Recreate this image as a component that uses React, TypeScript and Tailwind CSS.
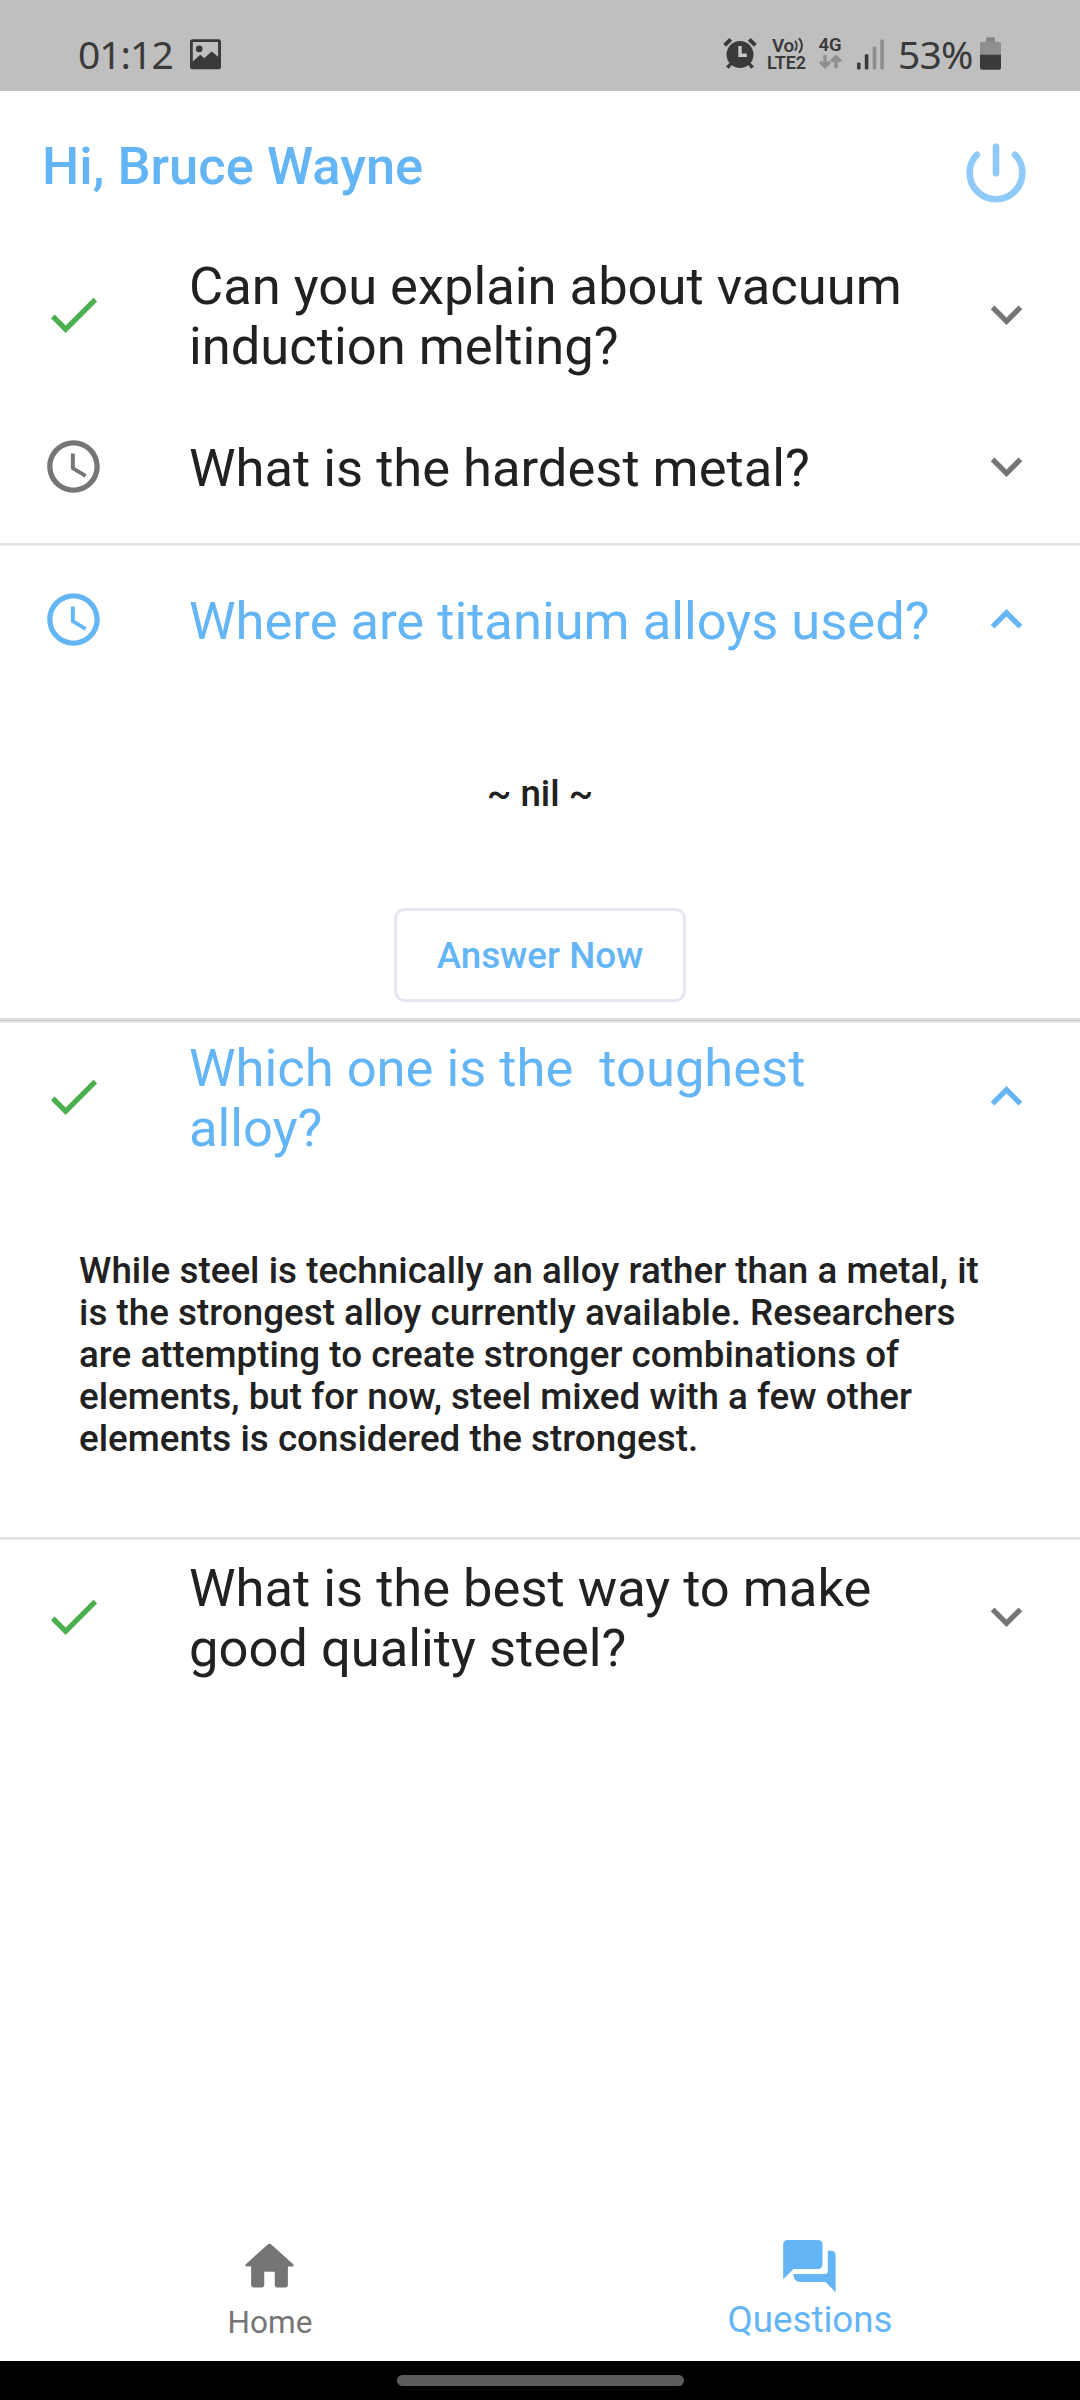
import type { ReactNode } from "react";

function AlarmIcon() {
  return (
    <svg className="h-[91px] w-[44px] shrink-0" viewBox="720 0 44 91" fill="none" stroke="#3a3a3a">
      <circle cx="740" cy="54.5" r="13.5" fill="#3a3a3a" stroke="none" />
      <path d="M724.6 45.2l6.2-5.8M755.4 45.2l-6.2-5.8" strokeWidth="4" />
      <path d="M731 63.5l-3.6 4.2M749 63.5l3.6 4.2" strokeWidth="3.4" />
      <path d="M740 46v9.3h6.8" stroke="#c6c6c6" strokeWidth="3.4" />
    </svg>
  );
}

function PictureIcon() {
  return (
    <svg className="h-[91px] w-[31px] shrink-0" viewBox="190 0 31 91">
      <path
        fill="#3a3a3a"
        fillRule="evenodd"
        d="M192.5 39.2h26a2.5 2.5 0 0 1 2.5 2.5v25a2.5 2.5 0 0 1-2.5 2.5h-26a2.5 2.5 0 0 1-2.5-2.5v-25a2.5 2.5 0 0 1 2.5-2.5zM192.8 42v19.4l6.8-6.2a1 1 0 0 1 1.4 0l3.2 3 6.8-6.2a1 1 0 0 1 1.4 0l5.7 4.8V42z"
      />
      <circle cx="199.2" cy="48.9" r="3.3" fill="#3a3a3a" />
    </svg>
  );
}

function SignalIcon() {
  return (
    <svg className="h-[91px] w-[48px] shrink-0" viewBox="848 0 48 91">
      <rect x="857" y="62.5" width="3.6" height="7" rx="1.2" fill="#3a3a3a" />
      <rect x="864.8" y="54.2" width="3.6" height="15.3" rx="1.2" fill="#3a3a3a" />
      <rect x="872.7" y="46.6" width="3.6" height="22.9" rx="1.2" fill="#8e8e8e" />
      <rect x="880.3" y="39.4" width="3.6" height="30.1" rx="1.2" fill="#8e8e8e" />
    </svg>
  );
}

function BatteryIcon() {
  return (
    <svg className="h-[91px] w-[21px] shrink-0" viewBox="980 0 21 91">
      <path d="M986 42v-3.2a1.5 1.5 0 0 1 1.5-1.5h6a1.5 1.5 0 0 1 1.5 1.5V42z" fill="#858585" />
      <path d="M980 55V43.8a2 2 0 0 1 2-2h17a2 2 0 0 1 2 2V55z" fill="#8f8f8f" />
      <path d="M980 54.8v13a2 2 0 0 0 2 2h17a2 2 0 0 0 2-2v-13z" fill="#3a3a3a" />
    </svg>
  );
}

function StatusBar() {
  return (
    <div className="flex h-[91px] shrink-0 bg-[#bfbfbf] pl-[78px] pr-[79px] text-[#3a3a3a]">
      <div className="w-[112px] pt-[32px] font-['Noto_Sans'] text-[39px] font-normal leading-[44px] tracking-[-1px]">
        01:12
      </div>
      <PictureIcon />
      <div className="grow" />
      <AlarmIcon />
      <div className="flex w-[48px] flex-col pt-[37px] font-semibold">
        <div className="flex h-[17px] pl-[8px] text-[19px] leading-[17px] tracking-[-0.4px]">
          Vo
          <svg className="h-[17px] w-[11px]" viewBox="0 0 11 17" fill="none" stroke="#3a3a3a" strokeWidth="2">
            <path d="M1 3.8c2.2 2.8 2.2 7 0 9.8M5 1.2c4 4.3 4 10.3 0 14.6" />
          </svg>
        </div>
        <div className="pl-[3px] text-[18px] leading-[17px]">LTE2</div>
      </div>
      <div className="flex w-[36px] flex-col pl-[6.5px] pt-[37px]">
        <div className="text-[18.5px] font-semibold leading-[17px]">4G</div>
        <svg className="ml-[0.5px] h-[15px] w-[23px]" viewBox="0 0 23 15" fill="none" stroke="#8e8e8e" strokeWidth="3.4">
          <path d="M6 1v11M1.2 7.8L6 12.6l4.8-4.8M17 14.2V3M12.2 7.6L17 2.8l4.8 4.8" />
        </svg>
      </div>
      <SignalIcon />
      <div className="w-[84px] pl-[2px] pt-[32px] font-['Noto_Sans'] text-[39px] font-normal leading-[44px] tracking-[-0.8px]">
        53%
      </div>
      <BatteryIcon />
    </div>
  );
}

function CheckIcon() {
  return (
    <svg className="size-[63px] text-[#4caf50]" viewBox="0 0 24 24" fill="currentColor">
      <path d="M9 16.17L4.83 12l-1.42 1.41L9 19 21 7l-1.41-1.41z" />
    </svg>
  );
}

function ClockIcon() {
  return (
    <svg className="size-[63px]" viewBox="0 0 24 24" fill="currentColor">
      <path d="M11.99 2C6.47 2 2 6.48 2 12s4.47 10 9.99 10C17.52 22 22 17.52 22 12S17.52 2 11.99 2zM12 20c-4.42 0-8-3.58-8-8s3.58-8 8-8 8 3.58 8 8-3.58 8-8 8z" />
      <path d="M12.5 7H11v6l5.25 3.15.75-1.23-4.5-2.67z" />
    </svg>
  );
}

function Chevron({ up }: { up?: boolean }) {
  return (
    <svg className="size-[63px]" viewBox="0 0 24 24" fill="currentColor">
      <path
        d={
          up
            ? "M12 8l-6 6 1.41 1.41L12 10.83l4.59 4.58L18 14z"
            : "M16.59 8.59L12 13.17 7.41 8.59 6 10l6 6 6-6z"
        }
      />
    </svg>
  );
}

type RowProps = {
  answered?: boolean;
  open?: boolean;
  className: string;
  children: ReactNode;
};

function QuestionRow({ answered, open, className, children }: RowProps) {
  const iconColor = open ? "text-[#64b5f6]" : "text-[#757575]";
  const titleColor = open ? "text-[#64b5f6]" : "text-[#212121]";
  return (
    <div className={`flex shrink-0 items-center px-[42px] ${className}`}>
      <div className={`-mt-px w-[147px] ${iconColor}`}>{answered ? <CheckIcon /> : <ClockIcon />}</div>
      <div className={`grow whitespace-pre pt-[2px] text-[52.5px] leading-[60px] ${titleColor}`}>{children}</div>
      <div className={`-mt-px ${iconColor}`}>
        <Chevron up={open} />
      </div>
    </div>
  );
}

function Divider() {
  return <div className="h-[3px] shrink-0 border-b border-[#ebebeb] bg-[#e0e0e0]" />;
}

export default function App() {
  return (
    <div className="flex h-[2400px] w-[1080px] flex-col overflow-hidden bg-white font-[Roboto,sans-serif]">
      <StatusBar />

      <header className="flex h-[148px] shrink-0 items-center justify-between px-[42px]">
        <h1 className="pt-[2px] text-[52.5px] font-medium leading-[60px] text-[#64b5f6]">Hi, Bruce Wayne</h1>
        <svg
          className="mr-[11px] mt-[15px] h-[62px] w-[62px]"
          viewBox="965 141.5 62 62"
          fill="none"
          stroke="#90caf9"
          strokeWidth="6.6"
          strokeLinecap="round"
        >
          <path d="M996 146.3v26.4M976.8 154.2a26.4 26.4 0 1 0 38.4 0" />
        </svg>
      </header>

      <QuestionRow answered className="h-[152px]">
        Can you explain about vacuum{"\n"}induction melting?
      </QuestionRow>
      <QuestionRow className="h-[152px]">What is the hardest metal?</QuestionRow>

      <Divider />
      <QuestionRow open className="h-[147px]">
        Where are titanium alloys used?
      </QuestionRow>
      <div className="flex shrink-0 flex-col items-center pb-[16px] pt-[80px] text-[36.75px] font-medium leading-[42px]">
        <p className="text-[#212121]">~ nil ~</p>
        <button className="mt-[93px] h-[94px] w-[292px] rounded-[11px] border-[3px] border-[#e8e6f3] pt-[2px] text-[#64b5f6]">
          Answer Now
        </button>
      </div>

      <div className="flex h-[5px] shrink-0 flex-col bg-[#e6e6e6]">
        <div className="h-[2px] bg-[#e0e0e0]" />
        <div className="h-px bg-[#c6c6c6]" />
      </div>
      <QuestionRow answered open className="h-[148px]">
        Which one is the{"  "}toughest{"\n"}alloy?
      </QuestionRow>
      <p className="shrink-0 whitespace-nowrap pb-[77px] pl-[79px] pt-[79px] text-[36.75px] font-medium leading-[42px] tracking-[0.025px] text-[#212121]">
        While steel is technically an alloy rather than a metal, it
        <br />
        is the strongest alloy currently available. Researchers
        <br />
        are attempting to create stronger combinations of
        <br />
        elements, but for now, steel mixed with a few other
        <br />
        elements is considered the strongest.
      </p>

      <Divider />
      <QuestionRow answered className="h-[154px]">
        What is the best way to make{"\n"}good quality steel?
      </QuestionRow>

      <div className="grow" />

      <nav className="grid h-[126px] shrink-0 grid-cols-2">
        <div className="flex flex-col items-center text-[#757575]">
          <svg className="mr-px size-[63px]" viewBox="0 0 24 24" fill="currentColor">
            <path d="M10 19v-5h4v5c0 .55.45 1 1 1h3c.55 0 1-.45 1-1v-7h1.7c.46 0 .68-.57.33-.87L12.67 3.6c-.38-.34-.96-.34-1.34 0l-8.36 7.53c-.34.3-.13.87.33.87H5v7c0 .55.45 1 1 1h3c.55 0 1-.45 1-1z" />
          </svg>
          <span className="mt-[7px] text-[31.5px] leading-[36px]">Home</span>
        </div>
        <div className="flex flex-col items-center pt-[5px] text-[#64b5f6]">
          <svg className="mr-px h-[53px] w-[53px]" viewBox="310.5 120 159 159" fill="currentColor">
            <path d="M325 120H415Q429 120 429 134V193Q429 207 415 207H342L311 238V134Q311 120 325 120Z" />
            <path d="M445 152H454Q468.500 152 468.500 167V276.500L438 246H364Q342 246 342 222H436Q445 222 445 212Z" />
          </svg>
          <span className="mt-[6px] text-[36.75px] leading-[42px]">Questions</span>
        </div>
      </nav>

      <div className="flex h-[39px] shrink-0 justify-center bg-black pt-[14px]">
        <div className="h-[11px] w-[287px] rounded-full bg-[#5c5c5c]" />
      </div>
    </div>
  );
}
